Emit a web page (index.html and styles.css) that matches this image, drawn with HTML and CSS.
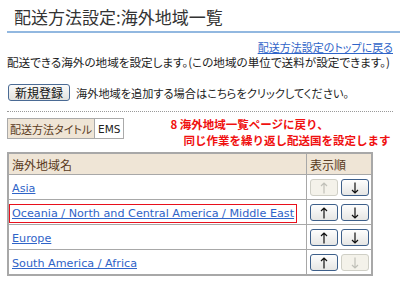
FILE: index.html
```html
<!DOCTYPE html>
<html lang="ja">
<head>
	<meta charset="UTF-8">
	<title>配送方法設定:海外地域一覧</title>
	<link rel="stylesheet" href="styles.css">
</head>
<body>
	<div class="page">
		<h1 class="title">配送方法設定:海外地域一覧</h1>
		<div class="back"><a href="#">配送方法設定のトップに戻る</a></div>
		<p class="desc">配送できる海外の地域を設定します。(この地域の単位で送料が設定できます。)</p>
		<div class="addrow">
			<button class="btn">新規登録</button>
			<span class="addtext">海外地域を追加する場合はこちらをクリックしてください。</span>
		</div>
		<div class="infoRow">
			<table class="method">
				<tr>
					<th>配送方法タイトル</th>
					<td>EMS</td>
				</tr>
			</table>
			<p class="note">8 海外地域一覧ページに戻り、<br><span class="indent">同じ作業を繰り返し配送国を設定します</span></p>
		</div>
		<table class="list">
			<tr>
				<th class="name">海外地域名</th>
				<th class="order">表示順</th>
			</tr>
			<tr>
				<td><a href="#">Asia</a></td>
				<td class="order"><button class="arr" disabled><svg viewBox="0 0 8 12"><path d="M4 11.5V1M1 4l3-3 3 3"/></svg></button><button class="arr"><svg viewBox="0 0 8 12"><path d="M4 .5V11M1 8l3 3 3-3"/></svg></button></td>
			</tr>
			<tr>
				<td><a href="#" class="mark">Oceania / North and Central America / Middle East</a></td>
				<td class="order"><button class="arr"><svg viewBox="0 0 8 12"><path d="M4 11.5V1M1 4l3-3 3 3"/></svg></button><button class="arr"><svg viewBox="0 0 8 12"><path d="M4 .5V11M1 8l3 3 3-3"/></svg></button></td>
			</tr>
			<tr>
				<td><a href="#">Europe</a></td>
				<td class="order"><button class="arr"><svg viewBox="0 0 8 12"><path d="M4 11.5V1M1 4l3-3 3 3"/></svg></button><button class="arr"><svg viewBox="0 0 8 12"><path d="M4 .5V11M1 8l3 3 3-3"/></svg></button></td>
			</tr>
			<tr>
				<td><a href="#">South America / Africa</a></td>
				<td class="order"><button class="arr"><svg viewBox="0 0 8 12"><path d="M4 11.5V1M1 4l3-3 3 3"/></svg></button><button class="arr" disabled><svg viewBox="0 0 8 12"><path d="M4 .5V11M1 8l3 3 3-3"/></svg></button></td>
			</tr>
		</table>
	</div>
</body>
</html>
```

FILE: styles.css
```css
body,div,p,h1,table,th,td{
	margin: 0;
	padding: 0;
}
body{
	background: #fff;
	color: #222;
	font-family: "Noto Sans CJK JP", sans-serif;
	font-size: 11px;
	font-feature-settings: "palt";
}
.page{
	padding: 0 7px;
}
.title{
	font-size: 17px;
	font-weight: normal;
	color: #333;
	line-height: 20px;
	padding: 7px 0 4px 7px;
	border-bottom: 2px solid #92b8e0;
	margin-right: -7px;
}
.back{
	text-align: right;
	line-height: 14px;
	margin-top: 7px;
}
a{
	color: #2f64c8;
}
.desc{
	font-size: 11.6px;
	line-height: 14px;
	margin-top: 1px;
	white-space: nowrap;
}
.addrow{
	display: flex;
	align-items: center;
	gap: 6px;
	margin-top: 15px;
	padding: 0 0 10px 1px;
	border-bottom: 1px dotted #999;
}
.addtext{
	font-size: 11.2px;
	white-space: nowrap;
}
.btn{
	font-family: "Noto Sans CJK JP", sans-serif;
	font-size: 12px;
	height: 17px;
	width: 62px;
	padding: 0;
	line-height: 14px;
	border: 1px solid #4a6a94;
	border-radius: 3px;
	background: linear-gradient(#fafafa, #e2e2de);
	color: #111;
}
.infoRow{
	display: flex;
	align-items: flex-start;
	margin-top: 6px;
}
.method{
	border-collapse: collapse;
	border: 1px solid #aaa;
}
.method th,.method td{
	border: 1px solid #aaa;
	height: 19px;
	padding: 0 2px;
	font-weight: normal;
	white-space: nowrap;
}
.method th{
	background: #efe5d6;
	color: #5a3b22;
	font-size: 11px;
}
.method td{
	font-family: "DejaVu Sans", sans-serif;
	font-size: 10.5px;
	padding: 0 3px;
}
.note{
	color: #f01010;
	font-weight: bold;
	font-size: 11.5px;
	font-feature-settings: normal;
	line-height: 16px;
	margin-left: 46px;
	margin-top: -2px;
	white-space: nowrap;
}
.indent{
	padding-left: 13px;
}
.list{
	margin-top: 4px;
	border-collapse: collapse;
	border: 2px solid #a8a8a8;
	width: 366px;
	table-layout: fixed;
}
.list th,.list td{
	border: 1px solid #a8a8a8;
	text-align: left;
	padding: 0 3px;
	height: 24px;
	white-space: nowrap;
}
.list th{
	background: #efe5d6;
	color: #5a3b22;
	font-weight: normal;
	font-size: 12px;
	height: 20px;
}
.list td a{
	font-family: "DejaVu Sans", sans-serif;
	font-size: 11.2px;
}
.list td a.mark{
	outline: 1px solid #e8101c;
	outline-offset: 2px;
}
.list .order{
	width: 59px;
	padding: 0 2px 0 3px;
}
.arr{
	width: 28px;
	height: 17px;
	padding: 0;
	margin-right: 3px;
	color: #111;
	border: 1px solid #3d5f8a;
	border-radius: 3px;
	background: linear-gradient(#fdfdfd, #e6e6e4);
	vertical-align: middle;
	display: inline-flex;
	align-items: center;
	justify-content: center;
}
.arr svg{
	width: 8px;
	height: 12px;
	fill: none;
	stroke: currentColor;
	stroke-width: 1.2;
}
.arr:last-child{
	margin-right: 0;
}
.arr:disabled{
	color: #c0c0b8;
	border-color: #cfcfc6;
	background: #f4f2ea;
}
```
